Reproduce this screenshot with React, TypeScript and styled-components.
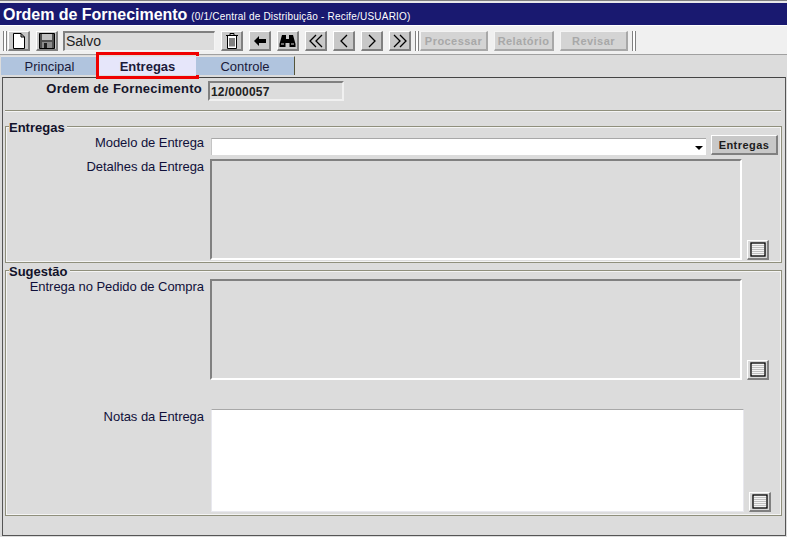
import styled, { createGlobalStyle } from 'styled-components';

const GlobalStyle = createGlobalStyle`
  * {
    box-sizing: border-box;
  }
  html,
  body {
    margin: 0;
    padding: 0;
    background: #dcdcdc;
  }
  body {
    font-family: 'Liberation Sans', Arial, sans-serif;
    color: #10103a;
  }
`;

const Page = styled.div`
  width: 787px;
  height: 537px;
  display: flex;
  flex-direction: column;
  overflow: hidden;
  background: #dcdcdc;
`;

const TitleBar = styled.div`
  height: 26px;
  display: flex;
  align-items: baseline;
  gap: 4px;
  padding: 5px 0 0 3px;
  background: #191970;
  color: #fff;
  border-top: 1px solid #808080;
  border-bottom: 1px solid #fff;
  box-shadow: inset 0 1px 0 #e8e8e8, inset 0 2px 0 #e8e8e8;
`;

const TitleText = styled.span`
  font-size: 16px;
  font-weight: bold;
  letter-spacing: -0.03px;
`;

const TitleContext = styled.span`
  font-size: 10px;
  letter-spacing: 0.2px;
`;

const Toolbar = styled.div`
  height: 29px;
  display: flex;
  align-items: flex-start;
  gap: 6px;
  padding: 5px 0 0 5px;
  background: #f0f0f0;
  border-bottom: 1px solid #a0a0a0;
`;

const Grip = styled.div`
  width: 4px;
  height: 20px;
  margin: 0 -5px 0 -2px;
  border-left: 1px solid #808080;
  border-right: 1px solid #808080;
  background: #fff;
`;

const ToolButton = styled.button`
  width: 22px;
  height: 20px;
  padding: 0;
  display: flex;
  align-items: center;
  justify-content: center;
  background: #c8c8c8;
  border-style: solid;
  border-width: 1px 2px 2px 1px;
  border-color: #fff #808080 #808080 #fff;
`;

const StatusField = styled.div`
  width: 152px;
  height: 20px;
  margin-left: -1px;
  padding-left: 1px;
  font-size: 14px;
  line-height: 17px;
  color: #222;
  background: #dcdcdc;
  border-style: solid;
  border-width: 2px 1px 1px 2px;
  border-color: #808080 #f4f4f4 #f4f4f4 #808080;
`;

const TextButton = styled.button<{ $width: number }>`
  width: ${(p) => p.$width}px;
  height: 20px;
  padding: 0;
  font-family: 'Liberation Sans', Arial, sans-serif;
  font-size: 11px;
  font-weight: bold;
  letter-spacing: 0.45px;
  color: #a8a8a8;
  background: #d4d4d4;
  border-style: solid;
  border-width: 1px 2px 2px 1px;
  border-color: #f4f4f4 #a8a8a8 #a8a8a8 #f4f4f4;
`;

const TabRow = styled.div`
  height: 22px;
  display: flex;
  padding: 1px 0 0 1px;
`;

const Tab = styled.div<{ $active?: boolean; $width: number; $last?: boolean }>`
  position: relative;
  width: ${(p) => p.$width}px;
  height: 19px;
  padding-left: ${(p) => (p.$active ? 1 : 0)}px;
  text-align: center;
  font-size: 13px;
  line-height: 20px;
  font-weight: ${(p) => (p.$active ? 'bold' : 'normal')};
  background: ${(p) => (p.$active ? '#e6e6fa' : '#b0c4de')};
  border-top: 1px solid #e4e4e4;
  border-right: ${(p) => (p.$last ? '1px solid #55553a' : 'none')};
  color: #1a1a3a;
`;

const Highlight = styled.span`
  position: absolute;
  left: -2px;
  right: -3px;
  top: -5px;
  bottom: -4px;
  border: 3px solid #f00000;
`;

const Panel = styled.div`
  width: 784px;
  height: 459px;
  margin-left: 2px;
  padding: 0 2px;
  border: 1px solid #555;
  border-top-color: #444;
`;

const OrderRow = styled.div`
  display: flex;
  padding-top: 3px;
`;

const OrderLabel = styled.div`
  width: 197px;
  text-align: right;
  font-size: 13px;
  font-weight: bold;
  letter-spacing: 0.26px;
  line-height: 16px;
  color: #15152a;
`;

const OrderField = styled.div`
  width: 136px;
  height: 20px;
  margin-left: 6px;
  padding-left: 1px;
  font-size: 12px;
  font-weight: bold;
  letter-spacing: 0.2px;
  line-height: 18px;
  color: #222;
  border-style: solid;
  border-width: 2px;
  border-color: #808080 #f0f0f0 #f0f0f0 #808080;
`;

const Divider = styled.div`
  width: 776px;
  height: 2px;
  margin-top: 9px;
  background: #8f8f7c;
  border-bottom: 1px solid #f4f4f4;
`;

const Group = styled.div<{ $height: number; $top: number }>`
  position: relative;
  width: 777px;
  height: ${(p) => p.$height}px;
  margin-top: ${(p) => p.$top}px;
  padding-top: 8px;
  border: 1px solid #8f8f7c;
  box-shadow: inset 0 0 0 1px #f4f4f4;
`;

const Legend = styled.span`
  position: absolute;
  left: 3px;
  top: -6px;
  padding-right: 2px;
  font-size: 13px;
  font-weight: bold;
  line-height: 14px;
  color: #12122a;
  background: #dcdcdc;
`;

const Row = styled.div<{ $top?: number }>`
  display: flex;
  align-items: flex-end;
  margin-top: ${(p) => p.$top ?? 0}px;
`;

const Label = styled.div`
  align-self: flex-start;
  width: 198px;
  text-align: right;
  font-size: 13px;
  line-height: 15px;
  letter-spacing: -0.05px;
`;

const Combo = styled.div`
  position: relative;
  width: 495px;
  height: 17px;
  margin: 0 0 0 7px;
  background: #fff;
  border-top: 1px solid #a8a8a8;
  border-left: 1px solid #c4c4c4;
`;

const ComboArrow = styled.span`
  position: absolute;
  right: 3px;
  top: 7px;
  width: 0;
  height: 0;
  border-left: 4px solid transparent;
  border-right: 4px solid transparent;
  border-top: 4px solid #000;
`;

const ActionButton = styled.button`
  width: 67px;
  height: 20px;
  margin-left: 5px;
  padding: 0;
  font-family: 'Liberation Sans', Arial, sans-serif;
  font-size: 11px;
  font-weight: bold;
  letter-spacing: 0.45px;
  color: #1c1c1c;
  background: #c8c8c8;
  border-style: solid;
  border-width: 1px 2px 2px 1px;
  border-color: #fff #808080 #808080 #fff;
`;

const ReadOnlyBox = styled.div`
  width: 532px;
  height: 101px;
  margin-left: 6px;
  border-style: solid;
  border-width: 2px;
  border-color: #808080 #fff #fff #808080;
`;

const NotesBox = styled.div`
  width: 533px;
  height: 103px;
  margin-left: 7px;
  background: #fff;
  border-style: solid;
  border-width: 1px;
  border-color: #a8a8a8 #e8e8ee #e8e8ee #e8e8ee;
`;

const ExpandButton = styled(ToolButton)`
  margin-left: 5px;
  background: #d8d8d8;
`;

const NewIcon = () => (
  <svg width="14" height="16" viewBox="0 0 14 16">
    <path d="M1.5 .5H9L12.5 4V15.5H1.5Z M9 .5V4H12.5" fill="#fff" stroke="#000" />
  </svg>
);

const SaveIcon = () => (
  <svg width="16" height="16" viewBox="0 0 16 16">
    <path d="M.5 .5H15.5V15.5H.5Z" fill="#505050" stroke="#000" />
    <rect x="3" y="1" width="10" height="6" fill="#c0c0c0" />
    <rect x="3" y="9" width="10" height="6" fill="#8c8c8c" />
    <rect x="5" y="10" width="3" height="5" fill="#202020" />
  </svg>
);

const TrashIcon = () => (
  <svg width="14" height="16" viewBox="0 0 14 16" fill="none" stroke="#000">
    <path d="M1 2.5H13 M5 2.5V.5H9V2.5" />
    <path d="M2.5 3V15.5H11.5V3" fill="#fff" />
    <path d="M5 5V13.5 M7 5V13.5 M9 5V13.5" />
  </svg>
);

const BackIcon = () => (
  <svg width="12" height="10" viewBox="0 0 12 10">
    <path d="M0 5L5 0V3H12V7H5V10Z" fill="#000" />
  </svg>
);

const BinocularsIcon = () => (
  <svg width="17" height="14" viewBox="0 0 17 14">
    <path d="M3 1H7V5H10V1H14L16.5 10V13H10.5V9H6.5V13H.5V10Z" fill="#000" />
    <path d="M2 10H5 M12 10H15" stroke="#d8d8d8" />
  </svg>
);

const Chevron = ({ points }: { points: string[] }) => (
  <svg width="14" height="14" viewBox="0 0 14 14" fill="none" stroke="#000" strokeWidth="1.3">
    {points.map((p) => (
      <polyline key={p} points={p} />
    ))}
  </svg>
);

const ListIcon = () => (
  <svg width="16" height="15" viewBox="0 0 16 15">
    <rect x="1" y="1" width="14" height="13" fill="#f4f4f4" stroke="#000" strokeWidth="1.3" />
    <path d="M2 3.5H14 M2 5.5H14 M2 7.5H14 M2 9.5H14 M2 11.5H14" stroke="#c0c0c0" />
  </svg>
);

export default function App() {
  return (
    <Page>
      <GlobalStyle />
      <TitleBar>
        <TitleText>Ordem de Fornecimento</TitleText>
        <TitleContext>(0/1/Central de Distribuição - Recife/USUARIO)</TitleContext>
      </TitleBar>
      <Toolbar>
        <Grip />
        <ToolButton><NewIcon /></ToolButton>
        <ToolButton><SaveIcon /></ToolButton>
        <StatusField>Salvo</StatusField>
        <ToolButton><TrashIcon /></ToolButton>
        <ToolButton><BackIcon /></ToolButton>
        <ToolButton><BinocularsIcon /></ToolButton>
        <ToolButton><Chevron points={['7,1 1,7 7,13', '13,1 7,7 13,13']} /></ToolButton>
        <ToolButton><Chevron points={['10,1 4,7 10,13']} /></ToolButton>
        <ToolButton><Chevron points={['4,1 10,7 4,13']} /></ToolButton>
        <ToolButton><Chevron points={['1,1 7,7 1,13', '7,1 13,7 7,13']} /></ToolButton>
        <Grip />
        <TextButton $width={68}>Processar</TextButton>
        <TextButton $width={60}>Relatório</TextButton>
        <TextButton $width={68}>Revisar</TextButton>
        <Grip />
      </Toolbar>
      <TabRow>
        <Tab $width={97}>Principal</Tab>
        <Tab $width={98} $active>
          Entregas
          <Highlight />
        </Tab>
        <Tab $width={99} $last>Controle</Tab>
      </TabRow>
      <Panel>
        <OrderRow>
          <OrderLabel>Ordem de Fornecimento</OrderLabel>
          <OrderField>12/000057</OrderField>
        </OrderRow>
        <Divider />
        <Group $height={137} $top={14}>
          <Legend>Entregas</Legend>
          <Row>
            <Label>Modelo de Entrega</Label>
            <Combo><ComboArrow /></Combo>
            <ActionButton>Entregas</ActionButton>
          </Row>
          <Row $top={4}>
            <Label>Detalhes da Entrega</Label>
            <ReadOnlyBox />
            <ExpandButton><ListIcon /></ExpandButton>
          </Row>
        </Group>
        <Group $height={246} $top={7}>
          <Legend>Sugestão</Legend>
          <Row>
            <Label>Entrega no Pedido de Compra</Label>
            <ReadOnlyBox />
            <ExpandButton><ListIcon /></ExpandButton>
          </Row>
          <Row $top={29}>
            <Label>Notas da Entrega</Label>
            <NotesBox />
            <ExpandButton><ListIcon /></ExpandButton>
          </Row>
        </Group>
      </Panel>
    </Page>
  );
}
